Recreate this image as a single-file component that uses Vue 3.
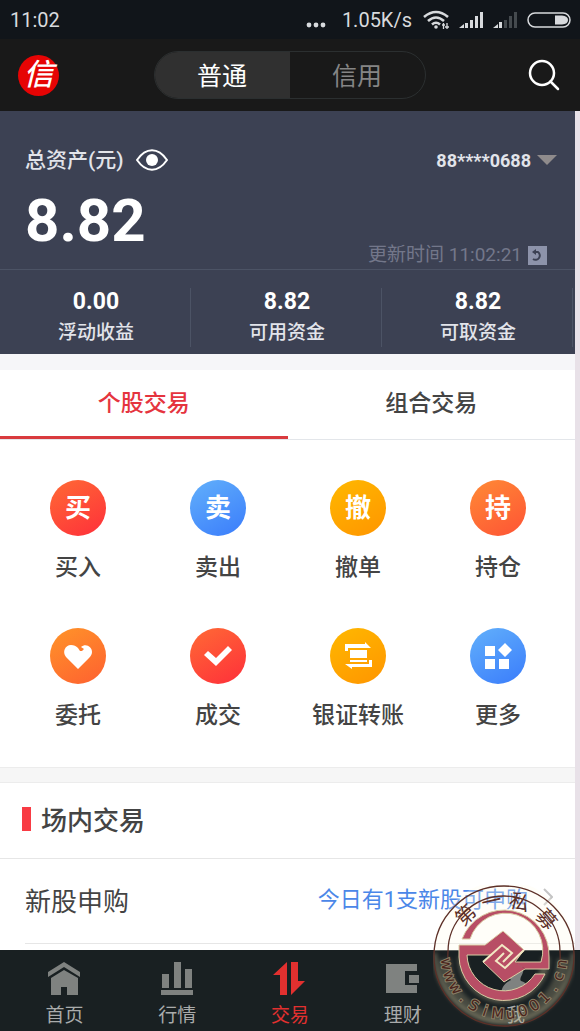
<script setup>
import { computed, ref } from "vue";

const accountType = ref("普通");
const accountTypes = ["普通", "信用"];

const showAssets = ref(true);
const total = "8.82";
const displayTotal = computed(() => (showAssets.value ? total : "****"));

const stats = [
  { label: "浮动收益", value: "0.00" },
  { label: "可用资金", value: "8.82" },
  { label: "可取资金", value: "8.82" },
];

const tradeTab = ref("个股交易");
const tradeTabs = ["个股交易", "组合交易"];

// Entries either have a character or an svg icon
const actions = [
  { label: "买入", char: "买", color: "red" },
  { label: "卖出", char: "卖", color: "blue" },
  { label: "撤单", char: "撤", color: "yellow" },
  { label: "持仓", char: "持", color: "orange" },
  { label: "委托", icon: "heart", color: "amber" },
  { label: "成交", icon: "check", color: "red" },
  { label: "银证转账", icon: "transfer", color: "yellow" },
  { label: "更多", icon: "more", color: "blue" },
];

const currentNav = ref("交易");
const navItems = [
  { label: "首页", path: "M1 11 17 1 33 11V16L17 6 1 16Z M4 17 17 9 31 17V34H20V26H14V34H4Z" },
  { label: "行情", path: "M2 13H9V27H2Z M14 1H21V27H14Z M25 8H32V27H25Z M1 29H33V34H1Z" },
  { label: "交易", path: "M15 1V34H8V14H1Z M19 1H26V20H33L19 34Z" },
  { label: "理财", path: "M1 3H32V10H20V24H32V32H1Z M24 14H34V22H24Z" },
  { label: "我", path: "M17 2C23 2 26 6 25 11C24 15 21 18 23 20C27 21 29 23 28 27C22 29 15 31 3 32C4 25 8 21 13 19C8 14 8 3 17 2Z" },
];

// Seal lettering, spread evenly along the lower half of the ring
const sealLetters = "www.SiMu001.cn".split("").map((char, i) => ({
  char,
  angle: 82 - (i * 164) / 13,
}));
const sealTop = [
  { char: "第", angle: -43 },
  { char: "一", angle: -13 },
  { char: "私", angle: 16 },
  { char: "募", angle: 49 },
];
</script>

<template>
  <div class="app">
    <div class="status">
      <span>11:02</span>
      <div class="status-right">
        <svg width="20" height="20" viewBox="0 0 20 20" fill="#d8dadd">
          <circle cx="3" cy="15" r="2.400" /><circle cx="10" cy="15" r="2.400" /><circle cx="17" cy="15" r="2.400" />
        </svg>
        <span class="speed">1.05K/s</span>
        <svg width="28" height="20" viewBox="0 0 28 20" fill="none" stroke="#d8dadd" stroke-width="2.600">
          <path d="M1 7Q13-3 25 7M5 11Q13 4 21 11M9 14.500Q13 11 17 14.500" />
          <circle cx="13" cy="17" r="1.800" fill="#d8dadd" stroke="none" />
          <path d="M20.500 13V19M24 13V19M19 15H22M22 17H26" stroke-width="1.300" />
        </svg>
        <svg width="26" height="20" viewBox="0 0 26 20" fill="#d8dadd">
          <path d="M0 18 5 14V18ZM6 13H9V18H6ZM11 10H14V18H11ZM16 6H19V18H16ZM21 2H24V18H21Z" />
        </svg>
        <svg width="26" height="20" viewBox="0 0 26 20" fill="#d8dadd">
          <path d="M0 18 5 14V18ZM6 12H9V18H6Z" />
          <path d="M11 10H14V18H11ZM16 6H19V18H16ZM21 2H24V18H21Z" fill="#454a4e" />
        </svg>
        <svg width="44" height="18" viewBox="0 0 44 18">
          <rect x="1" y="2" width="42" height="14" rx="7" fill="none" stroke="#d8dadd" stroke-width="1.500" />
          <path d="M28 4.500H35Q41 5 41 9T35 13.500H28Z" fill="#d8dadd" />
        </svg>
      </div>
    </div>

    <header class="header">
      <a href="#" class="logo">信</a>
      <div class="switch">
        <button
          v-for="type in accountTypes"
          :key="type"
          :class="{ active: accountType === type }"
          @click="accountType = type"
        >
          {{ type }}
        </button>
      </div>
      <button class="search" aria-label="搜索">
        <svg width="32" height="32" viewBox="0 0 32 32" fill="none" stroke="#fff" stroke-width="2.500" stroke-linecap="round">
          <circle cx="14" cy="14" r="12" /><path d="M22.500 22.500 30 30" />
        </svg>
      </button>
    </header>

    <main class="content">
      <section class="assets">
        <div class="assets-top">
          <div class="row">
            <div class="total-label">
              <span>总资产(元)</span>
              <button aria-label="显示资产" @click="showAssets = !showAssets">
                <svg width="32" height="22" viewBox="0 0 32 22">
                  <path d="M1 11C10-2 22-2 31 11C22 24 10 24 1 11Z" fill="none" stroke="#fff" stroke-width="2" />
                  <circle cx="16" cy="11" r="6" fill="#fff" />
                </svg>
              </button>
            </div>
            <button class="account">
              88****0688
              <svg width="20" height="10" viewBox="0 0 20 10"><path d="M0 0H20L10 10Z" fill="#8f8b8c" /></svg>
            </button>
          </div>
          <div class="row bottom">
            <strong class="total">{{ displayTotal }}</strong>
            <div class="updated">
              <span>更新时间 11:02:21</span>
              <button aria-label="刷新">
                <svg width="19" height="19" viewBox="0 0 19 19">
                  <path d="M0 0H19V19H0Z" fill="#8d93aa" />
                  <path d="M6 6H10A4.200 4.200 0 1 1 5 13" fill="none" stroke="#3c4153" stroke-width="2" />
                  <path d="M4 6 8 3V9Z" fill="#3c4153" />
                </svg>
              </button>
            </div>
          </div>
        </div>
        <div class="stats">
          <div v-for="stat in stats" :key="stat.label" class="stat">
            <strong>{{ stat.value }}</strong>
            <span>{{ stat.label }}</span>
          </div>
        </div>
      </section>

      <div class="gap"></div>

      <div class="tabs">
        <button
          v-for="tab in tradeTabs"
          :key="tab"
          :class="{ active: tradeTab === tab }"
          @click="tradeTab = tab"
        >
          {{ tab }}
        </button>
      </div>

      <div class="actions">
        <button v-for="item in actions" :key="item.label" class="action">
          <span class="circle" :class="item.color">
            <template v-if="item.char">{{ item.char }}</template>
            <svg v-else width="32" height="32" viewBox="0 0 32 32" fill="#fff">
              <path
                v-if="item.icon === 'heart'"
                d="M16 29 4 17C0 12 3 5 9 5C12 5 14 6 16 8L18 11 20 11 22 9 19 7C24 3 30 7 30 12C30 14 29 16 27 18Z"
              />
              <path v-if="item.icon === 'check'" d="M2 15 6 11 14 18 26 6 30 10 14 26Z" />
              <path
                v-if="item.icon === 'transfer'"
                d="M3 4H23V2L29 8H6V11H3ZM8 10H25V18H8ZM8 20H25V22H8ZM30 20V27H10V29L3 24H27V20Z"
              />
              <path
                v-if="item.icon === 'more'"
                d="M3 6H13V16H3ZM3 19H13V29H3ZM17 19H27V29H17ZM23 3 30 10 23 17 16 10Z"
              />
            </svg>
          </span>
          <span>{{ item.label }}</span>
        </button>
      </div>

      <div class="gap lined"></div>

      <section>
        <h2 class="section-title">场内交易</h2>
        <a href="#" class="entry">
          <span>新股申购</span>
          <span class="entry-note">
            今日有1支新股可申购
            <svg width="10" height="18" viewBox="0 0 10 18" fill="none" stroke="#c4c4c4" stroke-width="2"><path d="M1 1 9 9 1 17" /></svg>
          </span>
        </a>
      </section>
    </main>

    <nav class="nav">
      <a
        v-for="item in navItems"
        :key="item.label"
        href="#"
        :class="{ active: currentNav === item.label }"
        @click.prevent="currentNav = item.label"
      >
        <svg width="35" height="35" viewBox="0 0 35 35" fill="currentColor"><path :d="item.path" /></svg>
        <span>{{ item.label }}</span>
      </a>
    </nav>

    <!-- Seal over the lower right corner -->
    <svg class="seal" width="142" height="142" viewBox="0 0 142 142">
      <defs>
        <filter id="glow" x="-20%" y="-20%" width="140%" height="140%">
          <feGaussianBlur stdDeviation="2" />
        </filter>
      </defs>
      <path d="M1 66A70 70 0 0 1 141 66Z" fill="#fffdec" opacity="0.3" />
      <g filter="url(#glow)" fill="none" stroke="#b5ad88">
        <path d="M2 68A69 69 0 0 0 140 68" stroke-width="3" opacity="0.6" />
        <path d="M12 74A59 59 0 0 0 130 74" stroke-width="12" opacity="0.3" />
        <path d="M29 72A42 42 0 0 0 113 72" stroke-width="8" opacity="0.4" />
      </g>
      <g fill="none" stroke="#5d3028" stroke-width="1.300">
        <circle cx="71" cy="71" r="70" />
        <path d="M15 67A56 56 0 0 0 15 76M127 67A56 56 0 0 1 127 76" />
        <path d="M15 67A56 56 0 0 1 127 67" />
      </g>
      <!-- Ring arcs, the two bands and the diamond in the middle -->
      <g fill="#b84e65">
        <path d="M29 54A45 45 0 0 1 116 72V84H92L82 77H108A37 37 0 0 0 37 54Z" />
        <path d="M26 60H52V70H34A37 37 0 0 0 102 89H112A45 45 0 0 1 26 72Z" />
        <path d="M52 60 70 46 91 65 82 77 92 84 71 97 50 77 58 70H50Z" />
      </g>
      <g fill="none" stroke="#d9cda4" stroke-width="1">
        <path d="M29 54A45 45 0 0 1 116 72V84H92L71 97 50 77 58 70H34A37 37 0 0 0 102 89H112A45 45 0 0 1 26 72V60H52L70 46 91 65 82 77H108A37 37 0 0 0 37 54Z" />
      </g>
      <g fill="none" stroke="#f2e9c4" stroke-width="2">
        <path d="M50 77 69 60 79 68 70 77" />
        <path d="M91 65 72 83 63 76 71 68" />
      </g>
      <g class="seal-cjk">
        <text
          v-for="item in sealTop"
          :key="item.char"
          x="71"
          y="22"
          :transform="`rotate(${item.angle} 71 71)`"
        >{{ item.char }}</text>
      </g>
      <g class="seal-latin">
        <text
          v-for="(item, i) in sealLetters"
          :key="i"
          x="71"
          y="134"
          :transform="`rotate(${item.angle} 71 71)`"
        >{{ item.char }}</text>
      </g>
    </svg>
  </div>
</template>

<style>
body {
  margin: 0;
  background: #e8e1e8;
}
</style>

<style scoped>
.app {
  position: relative;
  display: flex;
  flex-direction: column;
  min-height: 100vh;
  font-family: Roboto, "Noto Sans CJK SC", sans-serif;
  color: #444;
}

button {
  padding: 0;
  border: none;
  background: none;
  font: inherit;
  color: inherit;
  cursor: pointer;
}

a {
  color: inherit;
  text-decoration: none;
}

svg {
  display: block;
}

/* Status bar */
.status {
  display: flex;
  align-items: center;
  justify-content: space-between;
  height: 39px;
  padding: 0 9px 0 10px;
  background: #11151a;
  color: #d8dadd;
  font-size: 20px;
}

.status-right {
  display: flex;
  align-items: center;
  gap: 8px;
}

.speed {
  margin: 0 3px 0 8px;
}

/* Header */
.header {
  display: flex;
  align-items: center;
  justify-content: space-between;
  height: 72px;
  padding: 0 20px 0 18px;
  background: #191919;
}

.logo {
  width: 41px;
  height: 41px;
  border-radius: 50%;
  background: #e60404;
  color: #fff;
  font-size: 30px;
  font-style: italic;
  font-weight: 500;
  line-height: 40px;
  text-align: center;
}

.switch {
  display: flex;
  width: 270px;
  height: 46px;
  margin-right: 8px;
  border: 1px solid #2b2f30;
  border-radius: 24px;
  overflow: hidden;
}

.switch button {
  flex: 1;
  padding-bottom: 2px;
  font-size: 25px;
  color: #858585;
}

.switch .active {
  background: #303030;
  color: #fff;
}

/* Assets */
.content {
  flex: 1;
  margin-right: 5px;
  background: #fff;
}

.assets {
  background: #3c4153;
  color: #e2e4ea;
}

.assets-top {
  box-sizing: border-box;
  height: 159px;
  padding: 35px 18px 0 25px;
  border-bottom: 1px solid #4c5365;
}

.row {
  display: flex;
  justify-content: space-between;
  align-items: center;
  height: 28px;
}

.row.bottom {
  align-items: flex-end;
  height: 93px;
}

.total-label {
  display: flex;
  align-items: center;
  gap: 12px;
  font-size: 21px;
  font-weight: 500;
  line-height: 26px;
}

.account {
  display: flex;
  align-items: center;
  gap: 6px;
  font-size: 18px;
  font-weight: 700;
}

.total {
  align-self: center;
  color: #fff;
  font-size: 60px;
  line-height: 60px;
}

.updated {
  display: flex;
  align-items: center;
  gap: 6px;
  margin-right: 10px;
  color: #73778a;
  font-size: 19px;
  line-height: 24px;
}

.stats {
  display: flex;
  align-items: flex-start;
  box-sizing: border-box;
  height: 84px;
  padding: 18px 2px 0 0;
}

.stat {
  flex: 1;
  display: flex;
  flex-direction: column;
  align-items: center;
  gap: 3px;
  padding-left: 2px;
  border-right: 1px solid #4c5365;
  font-size: 19px;
  font-weight: 500;
  line-height: 28px;
}

.stat strong {
  color: #fff;
  font-size: 23px;
}

.gap {
  height: 16px;
  background: #f6f6f9;
}

.gap.lined {
  box-sizing: border-box;
  border: solid #ececec;
  border-width: 1px 0;
  background: #f6f6f6;
}

/* Tabs */
.tabs {
  display: flex;
  height: 69px;
  border-bottom: 1px solid #e3e6ea;
}

.tabs button {
  flex: 1;
  padding-bottom: 4px;
  border-bottom: 3px solid transparent;
  font-size: 23px;
  font-weight: 500;
}

.tabs .active {
  border-color: #d93a3e;
  color: #e5343e;
}

/* Action grid */
.actions {
  display: grid;
  grid-template-columns: repeat(4, 1fr);
  row-gap: 45px;
  padding: 40px 7px 36px 8px;
}

.action {
  display: flex;
  flex-direction: column;
  align-items: center;
  gap: 17px;
  font-size: 23px;
  font-weight: 500;
  line-height: 30px;
}

.circle {
  display: flex;
  align-items: center;
  justify-content: center;
  width: 56px;
  height: 56px;
  border-radius: 50%;
  color: #fff;
  font-size: 26px;
  font-weight: 700;
}

.red {
  background: linear-gradient(150deg, #ff6a35, #fe2f3a);
}

.blue {
  background: linear-gradient(150deg, #62b0fb, #3a7cfb);
}

.yellow {
  background: linear-gradient(150deg, #ffb800, #ff9500);
}

.orange {
  background: linear-gradient(150deg, #ff8a35, #fe5335);
}

.amber {
  background: linear-gradient(150deg, #ff9429, #fe6030);
}

/* Section list */
.section-title {
  display: flex;
  align-items: center;
  box-sizing: border-box;
  gap: 10px;
  height: 76px;
  margin: 0;
  padding: 0 0 4px 22px;
  border-bottom: 1px solid #e6e6e6;
  font-size: 26px;
  font-weight: 500;
}

.section-title::before {
  content: "";
  width: 9px;
  height: 24px;
  background: #f83b44;
}

.entry {
  display: flex;
  align-items: center;
  justify-content: space-between;
  box-sizing: border-box;
  height: 85px;
  margin-left: 25px;
  padding: 0 22px 4px 0;
  border-bottom: 1px solid #e6e6e6;
  font-size: 26px;
}

.entry-note {
  display: flex;
  align-items: center;
  gap: 15px;
  padding-bottom: 4px;
  color: #4b87e8;
  font-size: 22px;
}

/* Bottom navigation */
.nav {
  display: flex;
  height: 81px;
  padding: 0 8px;
  background: #192022;
}

.nav a {
  flex: 1;
  display: flex;
  flex-direction: column;
  align-items: center;
  gap: 8px;
  padding-top: 11px;
  color: #7f8280;
  font-size: 19px;
  line-height: 24px;
}

.nav span {
  color: #a9abab;
}

.nav .active,
.nav .active span {
  color: #e2302f;
}

.seal {
  position: absolute;
  right: 5px;
  bottom: 4px;
  pointer-events: none;
}

.seal-cjk,
.seal-latin {
  fill: #5d3028;
  text-anchor: middle;
}

.seal-cjk {
  font-size: 20px;
}

.seal-latin {
  fill: #4a251d;
  font-family: "DejaVu Sans", sans-serif;
  font-size: 15px;
  paint-order: stroke;
  stroke: #8b8066;
  stroke-width: 2px;
}
</style>
